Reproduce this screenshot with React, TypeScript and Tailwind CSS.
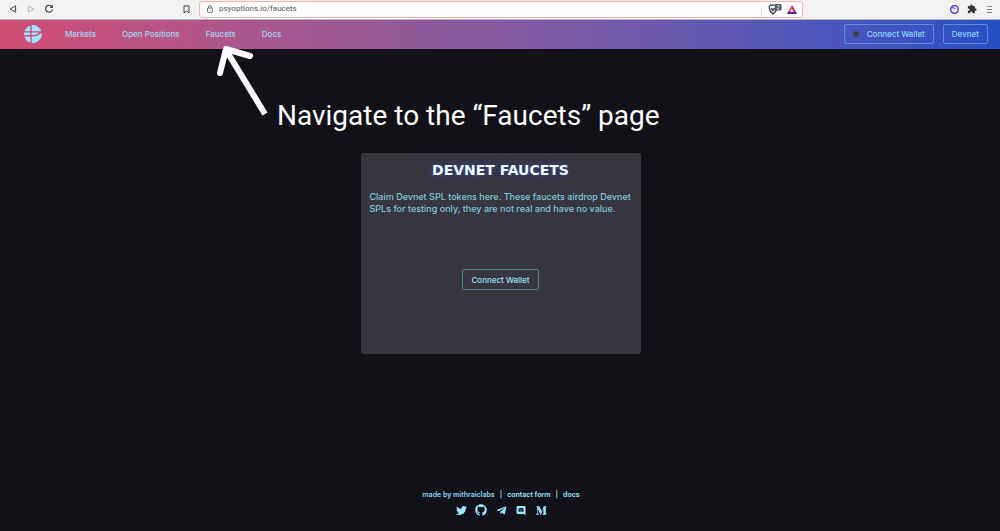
import { FaGithub, FaTelegramPlane, FaTwitter } from "react-icons/fa";
import { MdExtension } from "react-icons/md";

const navLinks = ["Markets", "Open Positions", "Faucets", "Docs"];

function BrowserBar() {
  return (
    <div className="flex h-5 items-center border-b border-[#b9b3c6] bg-[#f2f2f2] pr-[6px] pb-px pl-2 text-[#444]">
      <div className="flex w-[191px] items-center">
        <button aria-label="Back" className="mr-2">
          <svg className="size-[10px]" viewBox="0 0 10 10" fill="none" stroke="#444" strokeLinejoin="round">
            <path d="M7.6 1.8v6.4L2.2 5z" />
          </svg>
        </button>
        <button aria-label="Forward" className="mr-2">
          <svg className="size-[10px]" viewBox="0 0 10 10" fill="none" stroke="#b5b5b5" strokeLinejoin="round">
            <path d="M2.4 1.8v6.4L7.8 5z" />
          </svg>
        </button>
        <button aria-label="Reload">
          <svg className="size-[10px]" viewBox="0 0 10 10" fill="none" stroke="#333" strokeWidth="1.1">
            <path d="M7.9 2.6A3.5 3.5 0 1 0 8.5 5.6" />
            <path d="M8.8 .8v3.1H5.7z" fill="#333" stroke="none" />
          </svg>
        </button>
        <button aria-label="Bookmark" className="mr-2 ml-auto">
          <svg className="size-[9px]" viewBox="0 0 9 9" fill="none" stroke="#444">
            <path d="M2 .9h5v7L4.500 5.900 2 7.900z" strokeLinejoin="round" />
          </svg>
        </button>
      </div>
      <div className="flex h-[17px] min-w-0 flex-1 items-center rounded-[3px] border border-[#f3b5a5] bg-white px-[6px]">
        <svg className="size-[8px]" viewBox="0 0 8 8" fill="none" stroke="#555" strokeWidth=".8">
          <rect x="1.500" y="3" width="5" height="4.300" rx=".6" />
          <path d="M2.600 3V2a1.400 1.400 0 0 1 2.800 0v1M4 4.500v1.200" />
        </svg>
        <input
          aria-label="Address"
          defaultValue="psyoptions.io/faucets"
          className="ml-[5px] min-w-0 flex-1 bg-transparent font-['Roboto',sans-serif] text-[8px] leading-[12px] text-[#555] outline-none"
        />
        <span className="mr-[6px] h-[9px] w-px bg-[#ddd]" />
        <button aria-label="Shields" className="mr-[5px]">
          <svg className="h-[11px] w-[14px]" viewBox="0 0 14 11">
            <path d="M2.400 1.200h5l1.200 1.700-.8 4.300L5 10 2.200 7.200 1.200 2.900z" fill="#fff" stroke="#343546" strokeWidth="1.300" />
            <path d="M3 3.600l1.400.5L5 6l.6-1.900L7 3.600 6.300 6.500 5 7.500 3.700 6.500z" fill="#343546" />
            <rect x="7" y="0" width="6.500" height="6.500" rx="1.200" fill="#52556c" />
            <path d="M9 2.200c.3-1.200 2.300-1 2.200.2C11.200 3.300 9.300 4 9.100 4.900h2.300" fill="none" stroke="#fff" strokeWidth=".8" />
          </svg>
        </button>
        <button aria-label="Rewards" className="-mr-px">
          <svg className="h-[9px] w-[10px]" viewBox="0 0 10 9">
            <path d="M5 0 0 9h5V6.500H3.700L5 4z" fill="#f04a2c" />
            <path d="m5 0 5 9H7.600L5 4z" fill="#b5206a" />
            <path d="M0 9h10L8.500 6.500h-7z" fill="#4c2aa5" />
            <path d="m5 3.700 1.700 3H3.300z" fill="#fff" />
          </svg>
        </button>
      </div>
      <div className="flex w-[191px] items-center justify-end gap-2">
        <button aria-label="Extension">
          <svg className="size-[9px]" viewBox="0 0 9 9">
            <circle cx="4.500" cy="4.500" r="3.800" fill="#eeeaff" stroke="#4130d2" strokeWidth="1.300" />
            <path d="M1.800 2.800c1.500-.8 2.500 1 3.800.8" fill="none" stroke="#4130d2" />
          </svg>
        </button>
        <button aria-label="Extensions">
          <MdExtension className="size-[10px] text-[#333]" />
        </button>
        <button aria-label="Menu">
          <svg className="size-[9px]" viewBox="0 0 9 9" stroke="#888">
            <path d="M2 1.500h5M2 4.500h5M2 7.500h5" />
          </svg>
        </button>
      </div>
    </div>
  );
}

function Logo() {
  return (
    <svg className="size-[18px]" viewBox="0 0 18 18" fill="#9fe6fc">
      <path d="M6.300.5v5.700H.6A9 9 0 0 1 6.300.5z" />
      <path d="M7.700.1a9 9 0 0 1 9.700 6.100H7.700z" />
      <path d="M.2 7.400h6.100v2.700H.1a9 9 0 0 1 .1-2.700z" />
      <path d="M7.700 7.400h7.600c-1.600 1.700-4 2.600-7.600 2.700z" />
      <path d="M.5 11.400h5.800v6.100a9 9 0 0 1-5.800-6.100z" />
      <path d="M7.700 11.400c4.800-.1 7.600-1.300 10-3.700A9 9 0 0 1 7.700 17.900z" />
    </svg>
  );
}

function SiteHeader() {
  return (
    <header className="flex h-[29px] items-center bg-linear-to-r from-[#d04d74] to-[#254fc6] pr-3 pb-px pl-6 text-[8px] leading-[12px] font-medium text-[#a4d9f3]">
      <a href="#home" aria-label="PsyOptions">
        <Logo />
      </a>
      <nav className="ml-[23px] flex gap-[26px]">
        {navLinks.map((label) => (
          <a key={label} href="#nav">
            {label}
          </a>
        ))}
      </nav>
      <div className="ml-auto flex gap-[9px]">
        <button className="flex h-[20px] items-center rounded-[2px] border border-[#5d8fda] px-2 text-[#90dcff]">
          <span className="mr-2 size-[6px] rounded-full bg-[#3d414b]" />
          Connect Wallet
        </button>
        <button className="h-[20px] rounded-[2px] border border-[#5d8fda] px-2 text-[#90dcff]">Devnet</button>
      </div>
    </header>
  );
}

function Annotation() {
  return (
    <div className="pointer-events-none absolute top-[45px] left-[216px] flex items-start">
      <svg className="h-[72px] w-[52px]" viewBox="0 0 52 72" fill="none" stroke="#fff" strokeWidth="6" strokeLinejoin="round">
        <path d="m10 5 39 64" />
        <path d="M4 28 10 4l24 7" strokeLinecap="round" />
      </svg>
      <p className="mt-[53px] ml-[9px] font-['Roboto',sans-serif] text-[28px] leading-[36px] whitespace-nowrap text-white">
        Navigate to the “Faucets” page
      </p>
    </div>
  );
}

function FaucetCard() {
  return (
    <section className="flex min-h-[201px] w-[280px] flex-col items-center rounded-[3px] bg-[#37353e] px-[9px] pt-[9px] pb-16">
      <h1 className="font-['DejaVu_Sans',sans-serif] text-[14px] leading-[17px] font-bold text-[#eef8ff] [text-shadow:0_0_7px_#304ba8]">
        DEVNET FAUCETS
      </h1>
      <p className="mt-3 w-full text-[9px] leading-[12px] font-medium text-[#83cadc]">
        Claim Devnet SPL tokens here. These faucets airdrop Devnet SPLs for testing only, they are not real and have no value.
      </p>
      <button className="mt-auto h-[21px] rounded-[2px] border border-[#568391] px-2 text-[8px] leading-[12px] font-medium text-[#9ae3f6]">
        Connect Wallet
      </button>
    </section>
  );
}

function SiteFooter() {
  return (
    <footer className="flex flex-col items-center pt-[31px] pb-[15px] pl-[2px] text-[7px] leading-[12px] font-semibold text-[#8ed6ea]">
      <div className="flex gap-[5px]">
        <span>made by mithraiclabs</span>
        <span>|</span>
        <a href="#contact" className="text-[#9fe6fc]">contact form</a>
        <span>|</span>
        <a href="#docs" className="text-[#9fe6fc]">docs</a>
      </div>
      <div className="mt-[3px] grid grid-cols-5 items-center justify-items-center text-[#9fe6fc] *:flex *:w-5 *:justify-center">
        <a href="#twitter" aria-label="Twitter">
          <FaTwitter className="size-[11px]" />
        </a>
        <a href="#github" aria-label="GitHub">
          <FaGithub className="size-[12px]" />
        </a>
        <a href="#telegram" aria-label="Telegram">
          <FaTelegramPlane className="size-[11px]" />
        </a>
        <a href="#discord" aria-label="Discord">
          <svg className="h-[11px] w-[10px]" viewBox="0 0 10 11">
            <path d="M1.500 1h7Q9.500 1 9.500 2v8.500L8 9H1.500Q.5 9 .5 8V2Q.5 1 1.500 1z" fill="#9fe6fc" />
            <path d="M3 3.300 4 3h2l1 .3.800 2.700L6.700 7l-.6-.5H3.900L3.300 7l-1.100-1z" fill="#121117" />
            <path d="M3.600 4.500h.9v1h-.9zM5.500 4.500h.9v1h-.9z" fill="#9fe6fc" />
          </svg>
        </a>
        <a href="#medium" aria-label="Medium">
          <svg className="h-[9px] w-[11px]" viewBox="0 0 11 9" fill="#9fe6fc">
            <path d="M.4.3h2.900l2.400 5 2.100-5h2.800v.4l-.8.800v6l.8.800v.4H6.500v-.4l.9-.8V2.600L4.900 8.700h-.4L1.900 3v4l1 1.300v.4H.1v-.4L1.200 7V1.500L.4.700z" />
          </svg>
        </a>
      </div>
    </footer>
  );
}

export default function App() {
  return (
    <div className="relative flex min-h-screen flex-col bg-[#121117] font-['Inter',sans-serif]">
      <BrowserBar />
      <SiteHeader />
      <main className="flex flex-1 items-center justify-center pl-px">
        <FaucetCard />
      </main>
      <SiteFooter />
      <Annotation />
    </div>
  );
}
